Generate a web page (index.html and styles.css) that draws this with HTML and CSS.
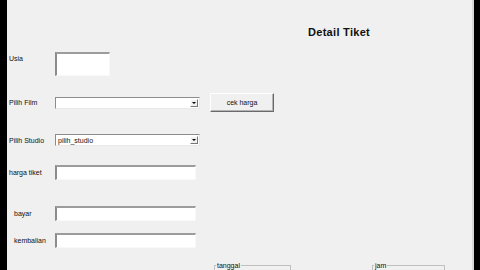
FILE: index.html
```html
<!DOCTYPE html>
<html lang="id">
<head>
    <meta charset="UTF-8">
    <meta name="viewport" content="width=device-width, initial-scale=1.0">
    <title>Detail Tiket</title>
    <link rel="stylesheet" href="styles.css">
</head>
<body>
    <div class="edge-left"></div>
    <div class="form">
        <h1 class="title">Detail Tiket</h1>

        <div class="row row-usia">
            <label class="lbl lbl-top">Usia</label>
            <input type="text" class="box box-usia">
        </div>

        <div class="row row-film">
            <label class="lbl">Pilih Film</label>
            <div class="combo">
                <span class="combo-text"></span>
                <span class="combo-btn"><span class="arrow"></span></span>
            </div>
            <button class="btn">cek harga</button>
        </div>

        <div class="row row-studio">
            <label class="lbl">Pilih Studio</label>
            <div class="combo">
                <span class="combo-text">pilih_studio</span>
                <span class="combo-btn"><span class="arrow"></span></span>
            </div>
        </div>

        <div class="row row-harga">
            <label class="lbl">harga tiket</label>
            <input type="text" class="box box-wide">
        </div>

        <div class="row row-bayar">
            <label class="lbl lbl-in">bayar</label>
            <input type="text" class="box box-wide">
        </div>

        <div class="row row-kembali">
            <label class="lbl lbl-in">kembalian</label>
            <input type="text" class="box box-wide">
        </div>

        <div class="row row-groups">
            <fieldset class="group group-tanggal"><legend>tanggal</legend></fieldset>
            <fieldset class="group group-jam"><legend>jam</legend></fieldset>
        </div>
    </div>
    <div class="edge-right"></div>
</body>
</html>
```

FILE: styles.css
```css
/* whole screen, black bars at the sides */
body {
    margin: 0;
    width: 480px;
    height: 270px;
    overflow: hidden;
    display: flex;
    background-color: #000;
    font-family: "Liberation Sans", Arial, sans-serif;
    font-size: 7px;
    color: #111;
}
.edge-left {
    width: 7px;
    background-color: #000;
}
.edge-right {
    width: 6px;
    border-left: 2px solid #d8d8d8;
    background-color: #000;
}
.form {
    flex: 1;
    background-color: #f0f0f0;
    display: flex;
    flex-direction: column;
    padding-left: 2px;
}
.title {
    margin: 26px 0 0 299px;
    font-size: 11px;
    line-height: 12px;
    font-weight: bold;
    letter-spacing: 0.3px;
    color: #111;
}
.row {
    display: flex;
    align-items: center;
}
.lbl {
    width: 46px;
    flex-shrink: 0;
    line-height: 9px;
}
.lbl-top {
    align-self: flex-start;
    padding-top: 2px;
}
.lbl-in {
    padding-left: 5px;
    width: 41px;
}
.row-usia { margin-top: 14px; }
.row-film { margin-top: 17px; }
.row-studio { margin-top: 22px; }
.row-harga { margin-top: 19px; }
.row-bayar { margin-top: 26px; }
.row-kembali { margin-top: 12px; }
.row-groups { margin-top: 14px; }

.box {
    appearance: none;
    margin: 0;
    padding: 0;
    box-sizing: border-box;
    background-color: #fff;
    border-top: 2px solid #9c9c9c;
    border-left: 2px solid #8c8c8c;
    border-right: 1px solid #f8f8f8;
    border-bottom: 1px solid #f8f8f8;
    outline: none;
}
.box-usia {
    width: 55px;
    height: 24px;
}
.box-wide {
    width: 141px;
    height: 15px;
}

.combo {
    width: 145px;
    height: 12px;
    box-sizing: border-box;
    display: flex;
    align-items: center;
    background-color: #fff;
    border-top: 1px solid #8c8c8c;
    border-left: 1px solid #8c8c8c;
    border-right: 1px solid #e8e8e8;
    border-bottom: 1px solid #e8e8e8;
}
.combo-text {
    flex: 1;
    padding-left: 2px;
    line-height: 9px;
}
.combo-btn {
    width: 8px;
    height: 8px;
    margin-right: 1px;
    box-sizing: border-box;
    display: flex;
    align-items: center;
    justify-content: center;
    background-color: #f0f0f0;
    border-top: 1px solid #fff;
    border-left: 1px solid #fff;
    border-right: 1px solid #777;
    border-bottom: 1px solid #777;
}
.arrow {
    width: 0;
    height: 0;
    border-left: 2px solid transparent;
    border-right: 2px solid transparent;
    border-top: 2px solid #000;
}

.btn {
    margin-left: 10px;
    width: 64px;
    height: 19px;
    padding: 0;
    font-family: inherit;
    font-size: 7px;
    color: #111;
    background-color: #f0f0f0;
    border-top: 1px solid #fff;
    border-left: 1px solid #fff;
    border-right: 1px solid #6a6a6a;
    border-bottom: 1px solid #6a6a6a;
    box-shadow: inset -1px -1px 0 #b4b4b4;
}

.group {
    margin: 0;
    padding: 0;
    height: 9px;
    box-sizing: border-box;
    border: 1px solid #c0c0c0;
    border-bottom: none;
}
.group legend {
    padding: 0 1px;
    margin-left: 1px;
    font-size: 7px;
    line-height: 7px;
}
.group-tanggal {
    margin-left: 205px;
    width: 77px;
}
.group-jam {
    margin-left: 81px;
    width: 73px;
}
```
